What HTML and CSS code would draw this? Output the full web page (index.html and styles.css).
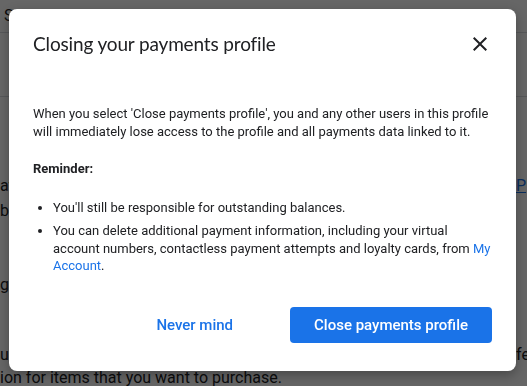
FILE: index.html
```html
<!DOCTYPE html>
<html lang="en">
<head>
    <meta charset="UTF-8">
    <meta name="viewport" content="width=device-width, initial-scale=1.0">
    <title>Payments profile</title>
    <link rel="stylesheet" href="styles.css">
</head>
<body>
    <!-- Settings page behind the dialog -->
    <div class="page">
        <div class="page-header"><span class="page-title">Settings</span></div>
        <div class="page-section"></div>

        <div class="page-row">
            <span class="row-text">at</span>
            <a class="row-link" href="#">P</a>
        </div>
        <div class="page-row">
            <span class="row-text">b</span>
        </div>

        <div class="page-line page-line-gap">gle</div>

        <div class="page-row page-row-gap">
            <span class="row-text">u</span>
            <span class="row-link-plain">fe</span>
        </div>
        <div class="page-line page-line-tight">ion for items that you want to purchase.</div>
    </div>

    <!-- Dim layer -->
    <div class="scrim"></div>

    <!-- Dialog -->
    <div class="dialog" role="dialog" aria-labelledby="dialog-title">
        <div class="dialog-header">
            <h2 class="dialog-title" id="dialog-title">Closing your payments profile</h2>
            <button class="icon-btn" aria-label="Close">
                <svg width="24" height="24" viewBox="0 0 24 24"><path d="M19 6.41L17.59 5 12 10.59 6.41 5 5 6.41 10.59 12 5 17.59 6.41 19 12 13.41 17.59 19 19 17.59 13.41 12z" fill="#202124"/></svg>
            </button>
        </div>

        <div class="dialog-body">
            <p>When you select 'Close payments profile', you and any other users in this profile will immediately lose access to the profile and all payments data linked to it.</p>
            <p class="reminder">Reminder:</p>
            <ul class="reminder-list">
                <li>You'll still be responsible for outstanding balances.</li>
                <li>You can delete additional payment information, including your virtual account numbers, contactless payment attempts and loyalty cards, from <a href="#">My Account</a>.</li>
            </ul>
        </div>

        <div class="dialog-actions">
            <button class="btn-text">Never mind</button>
            <button class="btn-primary">Close payments profile</button>
        </div>
    </div>
</body>
</html>
```

FILE: styles.css
```css
/* Page style */
body {
    margin: 0;
    padding: 0;
    overflow: hidden;
    background: #ffffff;
    font-family: Roboto, Arial, sans-serif;
    color: #202124;
}

/* Settings page behind the dialog */
.page {
    width: 527px;
    font-size: 16px;
}

.page-header {
    height: 32px;
    border-bottom: 1px solid #dadce0;
    padding-left: 4px;
    line-height: 31px;
}

.page-section {
    height: 63px;
    border-bottom: 1px solid #dadce0;
    margin-bottom: 76px;
}

.page-row {
    display: flex;
    line-height: 25px;
}

.row-text {
    width: 516px;
    flex-shrink: 0;
}

.row-link {
    color: #1a73e8;
}

.row-link-plain {
    color: #202124;
}

.page-line {
    line-height: 24px;
}

.page-line-gap {
    margin-top: 50px;
}

.page-row-gap {
    margin-top: 46px;
    line-height: 24px;
}

.page-line-tight {
    line-height: 22px;
}

/* Dim layer over the page */
.scrim {
    position: fixed;
    top: 0;
    left: 0;
    right: 0;
    bottom: 0;
    background: rgba(0, 0, 0, 0.6);
}

/* Dialog */
.dialog {
    position: fixed;
    top: 9px;
    left: 9px;
    width: 507px;
    box-sizing: border-box;
    padding: 23px 24px 28px;
    background: #ffffff;
    border-radius: 8px;
    box-shadow: 0 4px 12px rgba(0, 0, 0, 0.3);
}

.dialog-header {
    display: flex;
    justify-content: space-between;
    align-items: center;
    height: 24px;
}

.dialog-title {
    margin: 0;
    font-family: Lato, Roboto, sans-serif;
    font-size: 19px;
    font-weight: 400;
    letter-spacing: -0.15px;
    line-height: 24px;
    color: #202124;
}

.icon-btn {
    width: 24px;
    height: 24px;
    padding: 0;
    border: none;
    background: none;
    cursor: pointer;
}

.icon-btn svg {
    display: block;
}

/* Dialog text */
.dialog-body {
    margin-top: 49px;
    font-size: 13px;
    line-height: 17.5px;
    color: #202124;
}

.dialog-body p {
    margin: 0 0 20px;
}

.dialog-body .reminder {
    font-weight: 700;
    margin-bottom: 21px;
}

.reminder-list {
    margin: 0;
    padding-left: 20px;
}

.reminder-list li + li {
    margin-top: 6px;
}

.dialog-body a {
    color: #1a73e8;
    text-decoration: none;
}

/* Buttons */
.dialog-actions {
    display: flex;
    justify-content: flex-end;
    gap: 33px;
    margin-top: 32px;
}

.dialog-actions button {
    height: 36px;
    padding: 0 24px;
    border: none;
    border-radius: 4px;
    font-family: Roboto, Arial, sans-serif;
    font-size: 15px;
    font-weight: 500;
    cursor: pointer;
}

.btn-text {
    background: none;
    color: #1a73e8;
}

.btn-primary {
    background: #1a73e8;
    color: #ffffff;
}
```
